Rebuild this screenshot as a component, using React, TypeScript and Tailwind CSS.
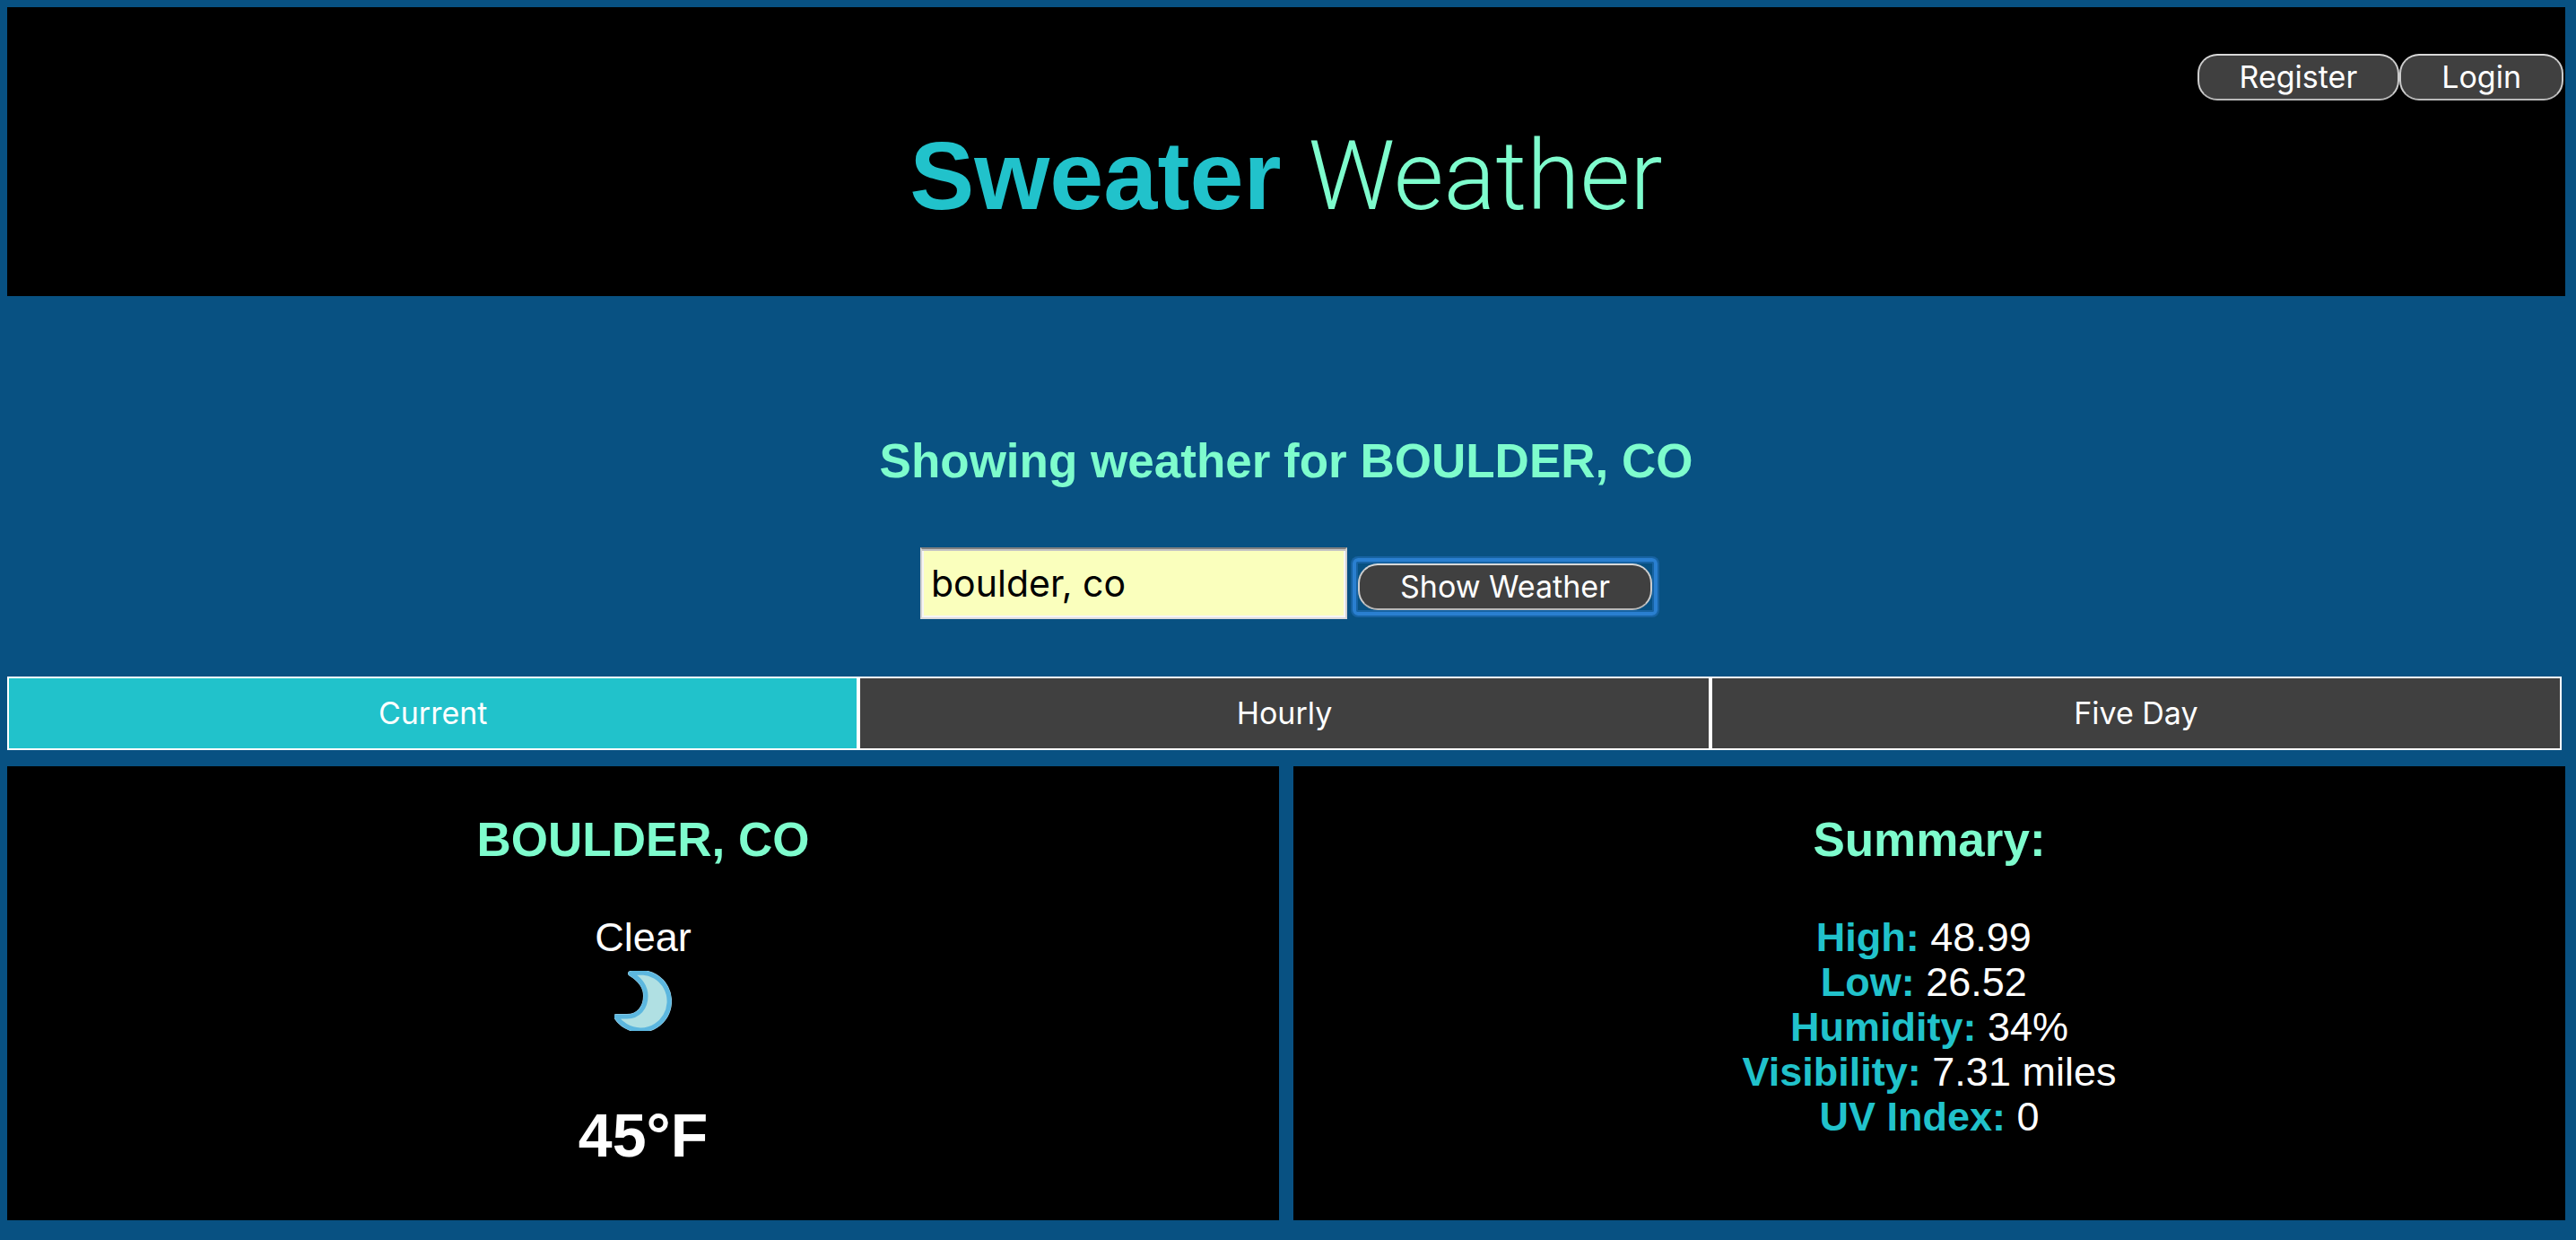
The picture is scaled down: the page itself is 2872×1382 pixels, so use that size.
import { useState } from 'react'

const tabs = ['Current', 'Hourly', 'Five Day']

const summary = [
  { label: 'High:', value: '48.99\u00a0' },
  { label: 'Low:', value: '26.52\u00a0' },
  { label: 'Humidity:', value: '34%' },
  { label: 'Visibility:', value: '7.31 miles' },
  { label: 'UV Index:', value: '0' },
]

const pill =
  "h-13 rounded-[22px] border-2 border-t-[#d8d8d8] border-x-[#cccccc] border-b-[#b8b8b8] bg-[#404040] px-[45px] font-['Inter',sans-serif] text-[34px] leading-12 text-white outline-none"

const moonShape = 'M18 3 C28 9 35 18 35 28 C35 41 27 51 14 51 L2 51 A32 32 0 1 0 31 2 C26 2 22 2 18 3 Z'

function Moon() {
  return (
    <svg viewBox="0 0 64 67" className="h-[67px] w-16" role="img" aria-label="Clear night">
      <path d={moonShape} stroke="#a9d8ec" strokeWidth="6" strokeLinejoin="round" />
      <path d={moonShape} fill="#b0e0e3" stroke="#5cb7df" strokeWidth="5" strokeLinejoin="round" />
    </svg>
  )
}

export default function App() {
  const [city, setCity] = useState('boulder, co')
  const [tab, setTab] = useState('Current')

  return (
    <div className="min-h-screen bg-[#085182] pt-2 pr-3 pb-[22px] pl-2 font-['Liberation_Sans',Arial,sans-serif] text-[45px] leading-[50px] text-white">
      <header className="bg-black pt-13 pb-[74px]">
        <nav className="flex justify-end pr-0.5">
          <button className={pill}>Register</button>
          <button className={pill}>Login</button>
        </nav>
        <h1 className="mt-6 text-center text-[108px] leading-[120px] font-bold text-[#21c2cb]">
          Sweater <span className="font-['Roboto',sans-serif] leading-none font-light text-[#7efccd]">Weather</span>
        </h1>
      </header>

      <main>
        <h2 className="mt-[152px] text-center text-[53px] leading-16 font-bold text-[#7efccd]">
          Showing weather for BOULDER, CO
        </h2>

        <form className="mt-16 flex items-center justify-center gap-1.5 pl-1.5" onSubmit={(e) => e.preventDefault()}>
          <input
            aria-label="City"
            value={city}
            onChange={(e) => setCity(e.target.value)}
            className="h-20 w-[476px] border-2 border-x-[#d2d2d2] border-t-[#7f7f7f] border-b-[#dcdcdc] bg-[#faffbd] px-2.5 font-['Inter',sans-serif] text-[41px] text-black shadow-[inset_0_2px_0_#c4c4c4,inset_0_0_0_2px_#f6f6f6] outline-none"
          />
          <div className="mt-2 flex rounded-md border-4 border-[#2a7fd0] p-0.5 shadow-[0_0_0_2px_#1763a3,inset_0_0_0_2px_#1763a3]">
            <button className={pill}>Show Weather</button>
          </div>
        </form>

        <div role="tablist" className="mt-16 mr-1 flex">
          {tabs.map((name) => (
            <button
              key={name}
              role="tab"
              aria-selected={tab === name}
              onClick={() => setTab(name)}
              className={`h-[82px] flex-1 border-2 border-white font-['Inter',sans-serif] text-[34px] ${
                tab === name ? 'bg-[#21c2cb]' : 'bg-[#404040]'
              }`}
            >
              {name}
            </button>
          ))}
        </div>

        <div className="mt-[18px] grid grid-cols-2 gap-4 text-center">
          <section className="flex flex-col items-center bg-black pt-[50px] pb-[55px]">
            <h3 className="text-[53px] leading-16 font-bold text-[#7efccd]">BOULDER, CO</h3>
            <p className="mt-[52px] mb-3">Clear</p>
            <Moon />
            <p className="mt-[76px] text-[68px] leading-20 font-bold">45°F</p>
          </section>
          <section className="bg-black pt-[50px] pb-[55px]">
            <h3 className="text-[53px] leading-16 font-bold text-[#7efccd]">Summary:</h3>
            <ul className="mt-[52px]">
              {summary.map(({ label, value }) => (
                <li key={label}>
                  <b className="text-[#21c2cb]">{label}</b> {value}
                </li>
              ))}
            </ul>
          </section>
        </div>
      </main>
    </div>
  )
}
